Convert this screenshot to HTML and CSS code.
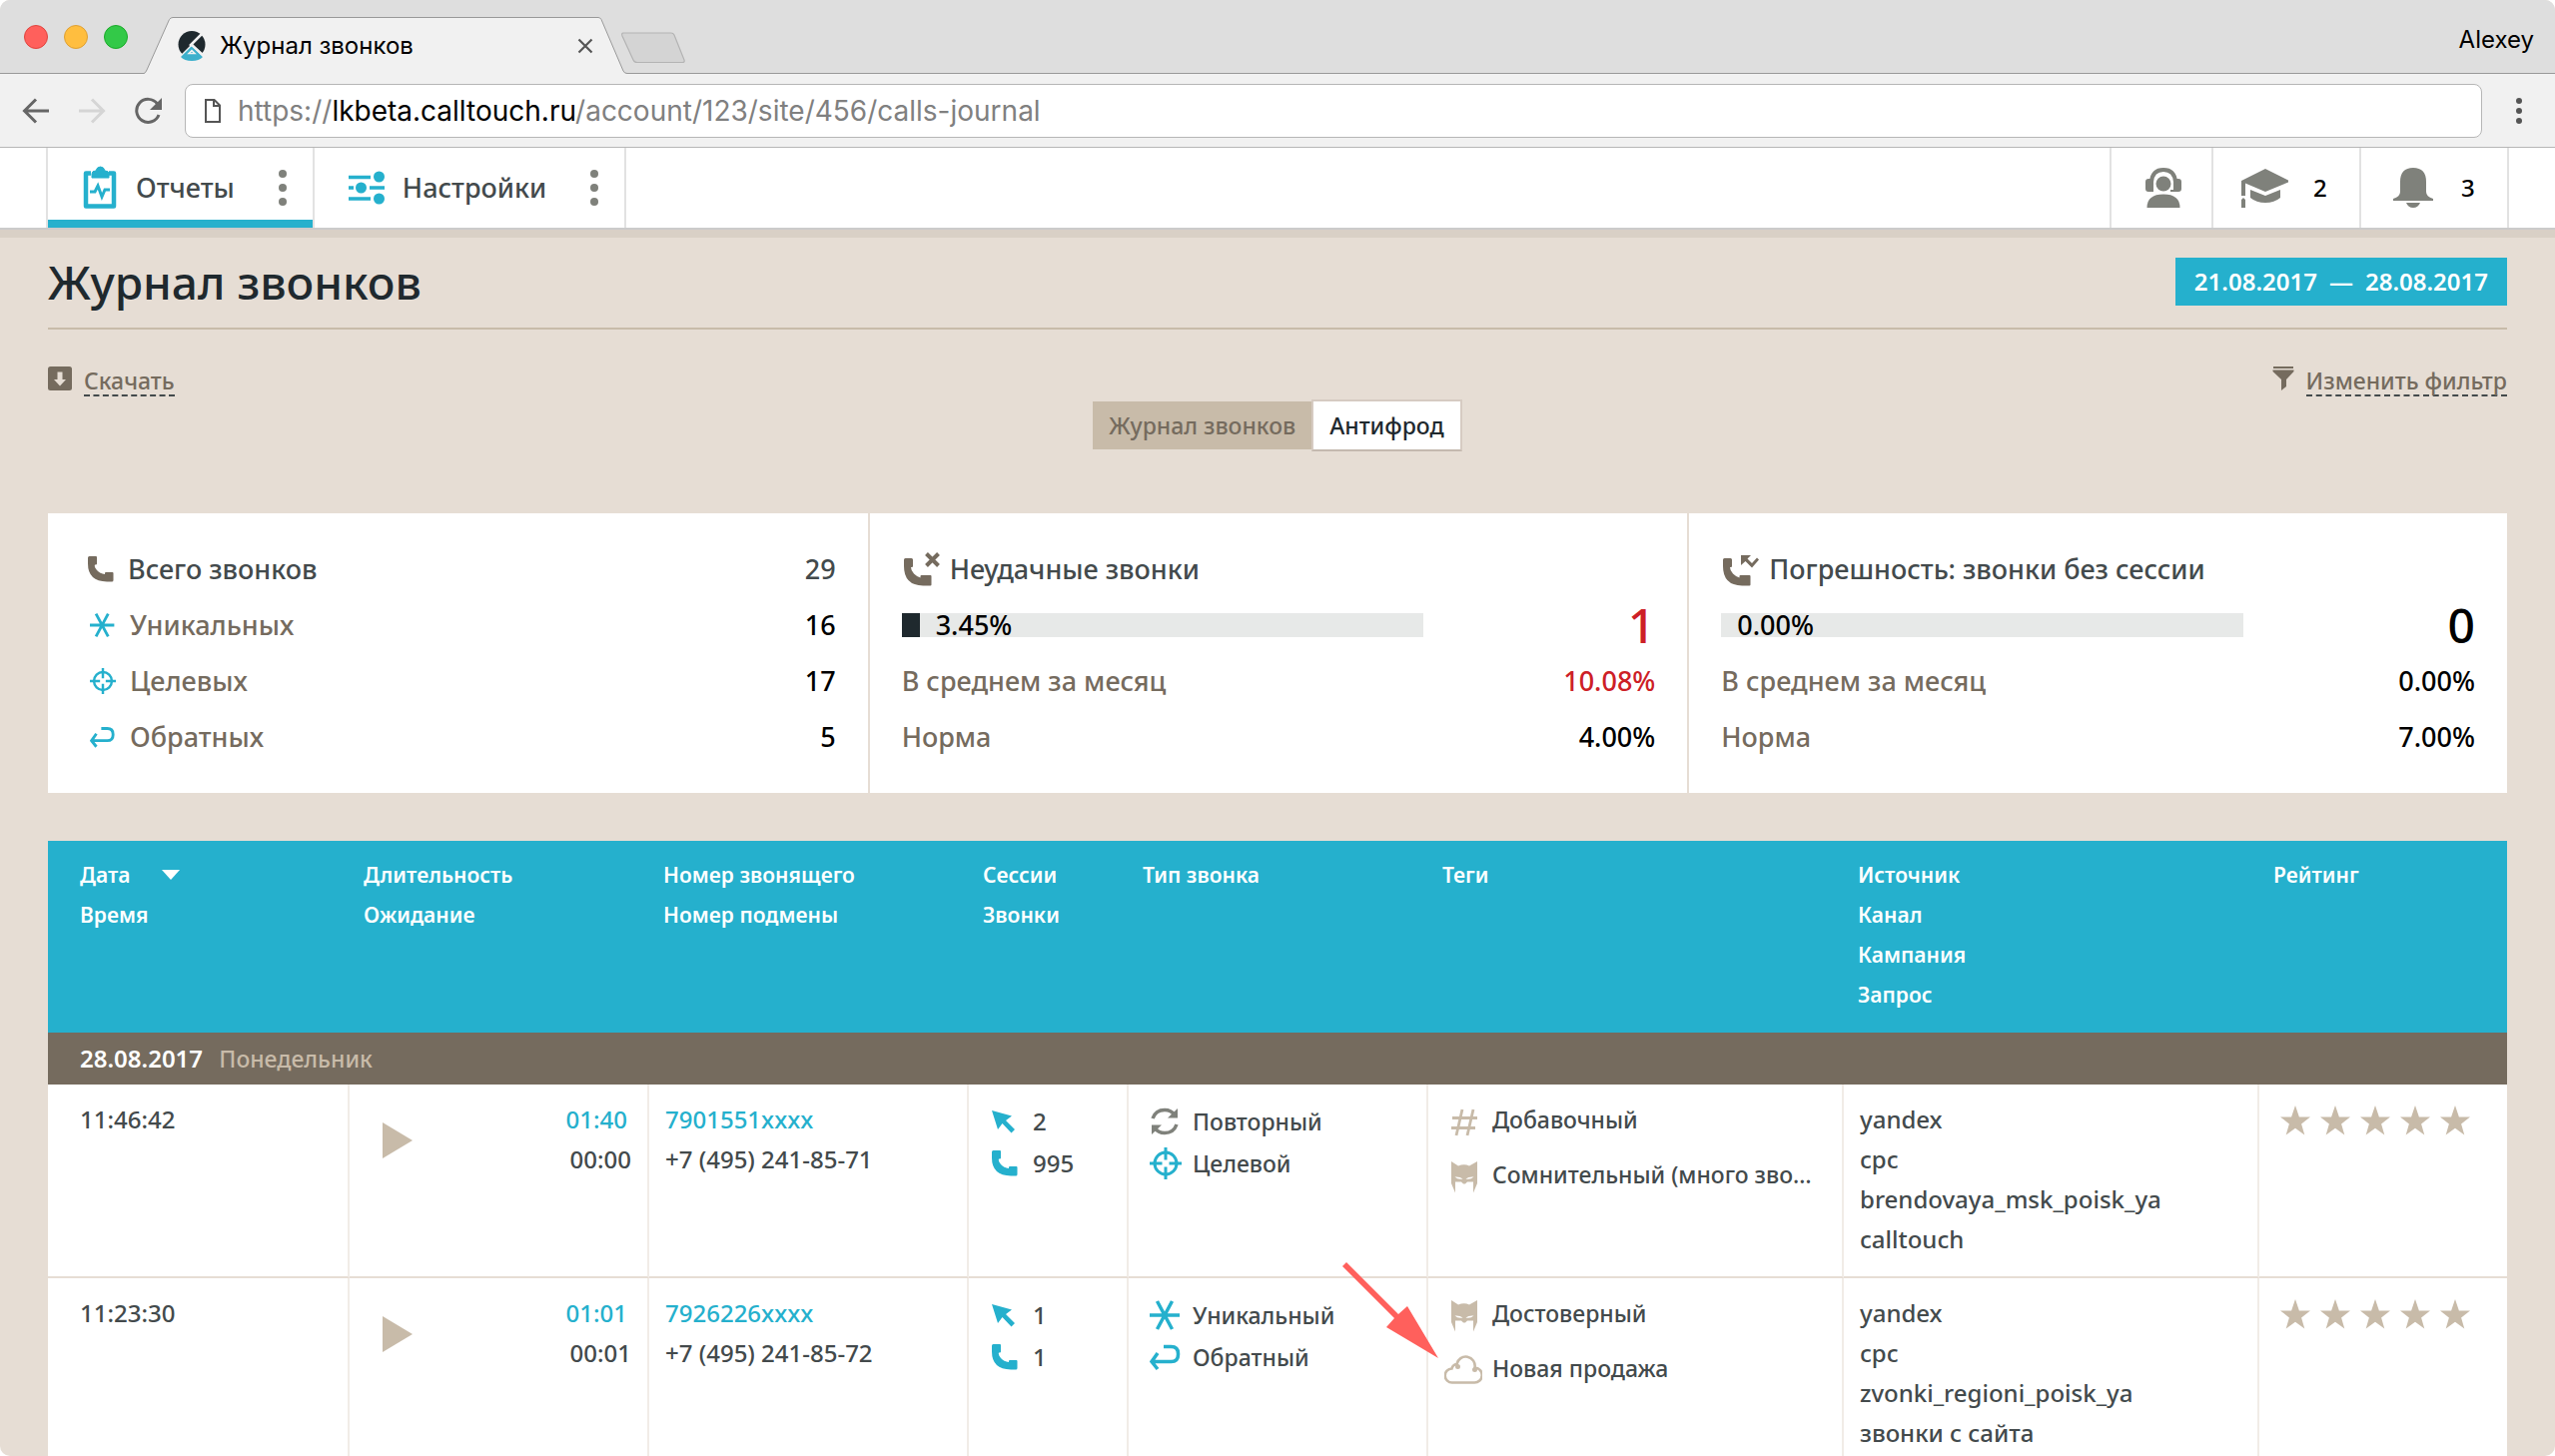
FILE: index.html
```html
<!DOCTYPE html>
<html lang="ru">
<head>
<meta charset="utf-8">
<meta name="viewport" content="width=device-width, initial-scale=1">
<title>Журнал звонков</title>
<link rel="stylesheet" href="styles.css">
</head>
<body>
<svg class="sprite" aria-hidden="true">
  <symbol id="phone" viewBox="0 0 26 26"><path d="M0 1.500Q0 0 1.500 0H8q1 0 1 1v6.500q0 1-1 1H7q-1 2 2 5.500t8 4v-1q0-1 1-1h6.500q1 0 1 1V24q0 1.500-1.500 1.500h-5Q0 25 0 7.500z" fill="currentColor"/></symbol>
  <symbol id="phone-cross" viewBox="0 0 38 34"><path d="M2 7.500Q2 6 3.500 6h6q1.500 0 1.500 1.500V14q0 1-1 1H9q0 3.500 3 6.500t6.500 4V24q0-1 1-1h9q1 0 1 1v8.500q0 1-1 1H21Q2 33 2 14z" fill="currentColor"/><path d="M24.500 1.500l12 12m0-12l-12 12" stroke="currentColor" stroke-width="4" fill="none"/></symbol>
  <symbol id="phone-missed" viewBox="0 0 38 34"><path d="M2 7.500Q2 6 3.500 6h6q1.500 0 1.500 1.500V14q0 1-1 1H9q0 3.500 3 6.500t6.500 4V24q0-1 1-1h9q1 0 1 1v8.500q0 1-1 1H21Q2 33 2 14z" fill="currentColor"/><path d="M20 3h10l-3.500 3.500 4.500 4.500 5-5.500 2 2-7 8-6.500-6.500L20 13z" fill="currentColor"/></symbol>
  <symbol id="star6" viewBox="0 0 32 32"><path d="M0 16h30M7.500 2l15 28M22.500 2l-15 28" stroke="currentColor" stroke-width="3.500" fill="none"/></symbol>
  <symbol id="target" viewBox="0 0 32 32"><circle cx="16" cy="16" r="11" fill="none" stroke="currentColor" stroke-width="3"/><path d="M16 0v12.500M16 19.500V32M0 16h12.500M19.500 16H32" stroke="currentColor" stroke-width="3" fill="none"/></symbol>
  <symbol id="return" viewBox="0 0 32 32"><path d="M14 5.500h7.500q7 0 7 7v1q0 7-7 7H3M8 12l-6 8.500L8 28" stroke="currentColor" stroke-width="3.500" fill="none"/></symbol>
  <symbol id="refresh" viewBox="0 0 32 32"><path d="M3 13Q6 4.500 15 4.500q6.500 0 10 5M27 19q-3 8.500-12 8.500-6.500 0-10-5" stroke="currentColor" stroke-width="3.500" fill="none"/><path d="M28 3v9.500H18zM2 29v-9.500h10z" fill="currentColor"/></symbol>
  <symbol id="cursor" viewBox="0 0 26 26"><path d="M0 2l20 5.500-6 4.500 9 9-3.500 3.500-9-9.500L6 21z" fill="currentColor"/></symbol>
  <symbol id="hash" viewBox="0 0 38 40"><path d="M8 18.500h25M7 28.500h24M18 10l-6 26M29 10l-6 26" stroke="currentColor" stroke-width="2.800" fill="none"/></symbol>
  <symbol id="mask" viewBox="0 0 38 40"><path fill-rule="evenodd" d="M7 7l7 4.500q6-2.500 11 0L33 7v22l-4 9.500V27.500h-6l-2 2h-2l-2-2h-6v11L7 29zM10.500 22.500q3 3 8 2-3-2.500-8-2zM29.500 22.500q-3 3-8 2 3-2.500 8-2z" fill="currentColor"/></symbol>
  <symbol id="cloud" viewBox="0 0 38 40"><path d="M8 34.500a7 7 0 0 1-.5-14 6 6 0 0 1 5-4.500 9 9 0 0 1 18 3.500 7.500 7.500 0 0 1-.5 15z" fill="none" stroke="currentColor" stroke-width="2.600"/><circle cx="13.500" cy="18.500" r="2.500" fill="currentColor"/><circle cx="30.500" cy="21.500" r="2.500" fill="currentColor"/></symbol>
  <symbol id="star" viewBox="0 0 30 30"><path d="M15 0l3.900 11.400H30l-8.900 7L24.300 29.500 15 22.800 5.700 29.500l3.200-11.100L0 11.400h11.100z" fill="currentColor"/></symbol>
  <symbol id="dots" viewBox="0 0 8 36"><circle cx="4" cy="4" r="4" fill="currentColor"/><circle cx="4" cy="18" r="4" fill="currentColor"/><circle cx="4" cy="32" r="4" fill="currentColor"/></symbol>
</svg>

<div class="window">
  <div class="tabstrip">
    <div class="lights"><span class="light light-close"></span><span class="light light-min"></span><span class="light light-max"></span></div>
    <div class="tab">
      <svg class="tab-shape" viewBox="0 0 484 57" preserveAspectRatio="none"><path d="M0 56.500Q1.500 56.500 3 53L25.500 2.500Q27 .500 29 .500H455q2 0 3 2L480 54q1 2.500 4 2.500V57H0z" fill="#f1f1f1"/><path d="M0 56.500Q1.500 56.500 3 53L25.500 2.500Q27 .500 29 .500H455q2 0 3 2L480 54q1 2.500 4 2.500" fill="none" stroke="#999"/></svg>
      <svg class="favicon" width="28" height="32" viewBox="0 0 28 32"><circle cx="14" cy="14.500" r="13.500" fill="#1f292e"/><path d="M14 14L1 27v5h26v-5z" fill="#f1f1f1"/><path d="M14 16L3 27q3.500 4 11 4t11-4z" fill="#3db0cc"/><path d="M12 16L25 3M13 14l13 12" stroke="#f1f1f1" stroke-width="2.500"/><path d="M14 20.500l3 3h-6z" fill="none" stroke="#f1f1f1" stroke-width="1.500"/></svg>
      <span class="tab-title">Журнал звонков</span>
      <button class="bare" aria-label="Закрыть вкладку"><svg width="16" height="16" viewBox="0 0 16 16"><path d="M1.500 1.500l13 13m0-13l-13 13" stroke="#555" stroke-width="2.200"/></svg></button>
    </div>
    <button class="bare new-tab" aria-label="Новая вкладка"><svg width="68" height="32" viewBox="0 0 68 32"><path d="M4 1h48q2 0 3 2l10 25q1 2.500-2 2.500H18q-3 0-4-2.500L3 4Q2 1 4 1z" fill="#d4d4d4" stroke="#b4b4b4" stroke-width="1.200"/></svg></button>
    <span class="profile">Alexey</span>
  </div>

  <div class="toolbar">
    <button class="bare" aria-label="Назад"><svg width="28" height="28" viewBox="0 0 28 28"><path d="M27 14H2M14 2.500L2.500 14 14 25.500" fill="none" stroke="#666" stroke-width="3"/></svg></button>
    <button class="bare" aria-label="Вперёд" disabled><svg width="28" height="28" viewBox="0 0 28 28"><path d="M1 14h25M14 2.500L25.500 14 14 25.500" fill="none" stroke="#d5d5d5" stroke-width="3"/></svg></button>
    <button class="bare" aria-label="Обновить"><svg width="28" height="28" viewBox="0 0 28 28"><path d="M23.500 7A11.500 11.500 0 1 0 25 18" fill="none" stroke="#666" stroke-width="3"/><path d="M28 1v12H16z" fill="#666"/></svg></button>
    <div class="omnibox">
      <svg width="18" height="26" viewBox="0 0 18 26"><path d="M2 2h8.500L16 7.500V24H2zM10 2v6h6" fill="none" stroke="#555" stroke-width="2"/></svg>
      <div class="url" role="textbox" tabindex="0" aria-label="Адрес">https://<b>lkbeta.calltouch.ru</b>/account/123/site/456/calls-journal</div>
    </div>
    <button class="bare" aria-label="Меню"><svg width="6" height="26" viewBox="0 0 6 26"><g fill="#555"><circle cx="3" cy="3" r="3"/><circle cx="3" cy="13" r="3"/><circle cx="3" cy="23" r="3"/></g></svg></button>
  </div>

  <header class="nav">
    <nav class="nav-main">
      <div class="nav-item nav-item-active">
        <a href="#reports"><svg width="36" height="44" viewBox="0 0 36 44"><path d="M9 7.500H4v33h28v-33h-5" fill="none" stroke="#25b0cd" stroke-width="4.500" stroke-linejoin="round"/><path d="M10 12V8q0-3 4-3 1-4 4.500-4T23 5q4 0 4 3v4z" fill="#25b0cd" stroke="#25b0cd" stroke-width="1"/><path d="M8 26h5l3-6 4 11 3-7h5" fill="none" stroke="#25b0cd" stroke-width="3"/></svg>Отчеты</a>
        <button class="bare nav-dots" aria-label="Меню отчетов"><svg width="8" height="36"><use href="#dots"/></svg></button>
      </div>
      <div class="nav-item">
        <a href="#settings"><svg width="36" height="34" viewBox="0 0 36 34"><path d="M0 6.500h22M0 17h5M21 17h15M0 28h22" stroke="#25b0cd" stroke-width="3.500"/><g fill="#25b0cd"><circle cx="30.500" cy="6" r="5.500"/><circle cx="12.500" cy="17" r="5.500"/><circle cx="30.500" cy="28" r="5.500"/></g></svg>Настройки</a>
        <button class="bare nav-dots" aria-label="Меню настроек"><svg width="8" height="36"><use href="#dots"/></svg></button>
      </div>
    </nav>
    <div class="nav-side">
      <button class="side-item side-support" aria-label="Поддержка"><svg width="36" height="40" viewBox="0 0 36 40"><circle cx="18" cy="16" r="7.500" fill="#7f817b"/><path d="M1.500 40q0-13.500 16.500-13.500T34.500 40z" fill="#7f817b"/><path d="M6 14Q7 2 18 2t12 12v8" fill="none" stroke="#7f817b" stroke-width="4"/><path d="M8 11v13H3q-3 0-3-3v-7q0-3 3-3zM28 11v11h-3v2h8q3 0 3-3v-7q0-3-3-3z" fill="#7f817b"/></svg></button>
      <button class="side-item" aria-label="Обучение: 2"><svg width="48" height="40" viewBox="0 0 48 40"><path d="M24 1l23 11.500v2L24 24 4 15.500V28H0V13zM9 22l15 6 15-6v8q-6 5-15 5t-15-5zM0 32l2-2 2 2v8H0z" fill="#7f817b"/></svg><span>2</span></button>
      <button class="side-item" aria-label="Уведомления: 3"><svg width="48" height="40" viewBox="0 0 48 40"><path d="M4 33v-2q7-2 7-7V14Q11 0 24 0t13 14v10q0 5 7 7v2zM17 35h14q-2 5-7 5t-7-5z" fill="#7f817b"/></svg><span>3</span></button>
    </div>
  </header>

  <main class="page">
    <div class="page-head">
      <h1>Журнал звонков</h1>
      <button class="date-range"><span>21.08.2017</span><span>—</span><span>28.08.2017</span></button>
    </div>

    <div class="actions">
      <a class="action" href="#download"><svg width="24" height="24" viewBox="0 0 24 24"><rect width="24" height="24" rx="2.500" fill="#756b5e"/><path d="M9.500 5.500h5v7.500h3.500L12 19.500 6 13h3.500z" fill="#e6ddd4"/></svg><span>Скачать</span></a>
      <a class="action" href="#filter"><svg width="22" height="24" viewBox="0 0 22 24"><path d="M1 0h20v2H1zM.500 3.500h21V5L14 13v7l-5 4V13L.500 5z" fill="#756b5e"/></svg><span>Изменить фильтр</span></a>
    </div>

    <div class="switch">
      <button class="switch-item switch-item-current">Журнал звонков</button>
      <button class="switch-item">Антифрод</button>
    </div>

    <section class="cards">
      <div class="card card-totals">
        <div class="stat stat-head"><svg width="26" height="26"><use href="#phone"/></svg><span class="stat-name">Всего звонков</span><span>29</span></div>
        <div class="stat"><svg width="26" height="26"><use href="#star6"/></svg><span class="stat-name">Уникальных</span><span>16</span></div>
        <div class="stat"><svg width="26" height="26"><use href="#target"/></svg><span class="stat-name">Целевых</span><span>17</span></div>
        <div class="stat"><svg width="26" height="26"><use href="#return"/></svg><span class="stat-name">Обратных</span><span>5</span></div>
      </div>
      <div class="card">
        <div class="stat stat-head"><svg width="38" height="34"><use href="#phone-cross"/></svg><span class="stat-name">Неудачные звонки</span></div>
        <div class="gauge"><div class="bar"><span class="bar-fill" style="width:3.45%"></span><span>3.45%</span></div><strong class="alert">1</strong></div>
        <div class="stat"><span class="stat-name">В среднем за месяц</span><span class="alert">10.08%</span></div>
        <div class="stat"><span class="stat-name">Норма</span><span>4.00%</span></div>
      </div>
      <div class="card">
        <div class="stat stat-head"><svg width="38" height="34"><use href="#phone-missed"/></svg><span class="stat-name">Погрешность: звонки без сессии</span></div>
        <div class="gauge"><div class="bar"><span class="bar-fill" style="width:0%"></span><span>0.00%</span></div><strong>0</strong></div>
        <div class="stat"><span class="stat-name">В среднем за месяц</span><span>0.00%</span></div>
        <div class="stat"><span class="stat-name">Норма</span><span>7.00%</span></div>
      </div>
    </section>

    <table class="calls">
      <colgroup><col class="c-date"><col class="c-length"><col class="c-number"><col class="c-sessions"><col class="c-type"><col><col><col class="c-rating"></colgroup>
      <thead>
        <tr>
          <th><button class="sort">Дата<svg width="18" height="10" viewBox="0 0 18 10"><path d="M0 0h18L9 10z" fill="#fff"/></svg></button><br>Время</th>
          <th>Длительность<br>Ожидание</th>
          <th>Номер звонящего<br>Номер подмены</th>
          <th>Сессии<br>Звонки</th>
          <th>Тип звонка</th>
          <th>Теги</th>
          <th>Источник<br>Канал<br>Кампания<br>Запрос</th>
          <th>Рейтинг</th>
        </tr>
      </thead>
      <tbody>
        <tr class="day"><th colspan="8" scope="rowgroup">28.08.2017 <span>Понедельник</span></th></tr>
        <tr>
          <td>11:46:42</td>
          <td><div class="length"><button class="bare play" aria-label="Прослушать"><svg width="30" height="36" viewBox="0 0 30 36"><path d="M0 0l30 18L0 36z" fill="#c8bba9"/></svg></button><div><a href="#call-1">01:40</a><br>00:00</div></div></td>
          <td><a href="#caller-1">7901551xxxx</a><br>+7 (495) 241-85-71</td>
          <td><ul class="marks marks-small"><li><svg width="26" height="26"><use href="#cursor"/></svg>2</li><li><svg width="26" height="26"><use href="#phone"/></svg>995</li></ul></td>
          <td><ul class="marks"><li class="grey"><svg width="32" height="32"><use href="#refresh"/></svg>Повторный</li><li><svg width="32" height="32"><use href="#target"/></svg>Целевой</li></ul></td>
          <td class="tags-cell"><ul class="tags"><li><svg width="38" height="40"><use href="#hash"/></svg>Добавочный</li><li><svg width="38" height="40"><use href="#mask"/></svg>Сомнительный (много зво…</li></ul></td>
          <td>yandex<br>cpc<br>brendovaya_msk_poisk_ya<br>calltouch</td>
          <td><div class="rating"><button class="bare" aria-label="Оценка 1"><svg width="30" height="30"><use href="#star"/></svg></button><button class="bare" aria-label="Оценка 2"><svg width="30" height="30"><use href="#star"/></svg></button><button class="bare" aria-label="Оценка 3"><svg width="30" height="30"><use href="#star"/></svg></button><button class="bare" aria-label="Оценка 4"><svg width="30" height="30"><use href="#star"/></svg></button><button class="bare" aria-label="Оценка 5"><svg width="30" height="30"><use href="#star"/></svg></button></div></td>
        </tr>
        <tr>
          <td>11:23:30</td>
          <td><div class="length"><button class="bare play" aria-label="Прослушать"><svg width="30" height="36" viewBox="0 0 30 36"><path d="M0 0l30 18L0 36z" fill="#c8bba9"/></svg></button><div><a href="#call-2">01:01</a><br>00:01</div></div></td>
          <td><a href="#caller-2">7926226xxxx</a><br>+7 (495) 241-85-72</td>
          <td><ul class="marks marks-small"><li><svg width="26" height="26"><use href="#cursor"/></svg>1</li><li><svg width="26" height="26"><use href="#phone"/></svg>1</li></ul></td>
          <td><ul class="marks"><li><svg width="32" height="32"><use href="#star6"/></svg>Уникальный</li><li><svg width="32" height="32"><use href="#return"/></svg>Обратный</li></ul></td>
          <td class="tags-cell"><ul class="tags"><li><svg width="38" height="40"><use href="#mask"/></svg>Достоверный</li><li><svg width="38" height="40"><use href="#cloud"/></svg>Новая продажа</li></ul><svg class="pointer" width="97" height="97" viewBox="0 0 97 97"><path d="M4 0l52 52 9-8 31 52-52-31 8-9L0 4z" fill="#ff605c"/></svg></td>
          <td>yandex<br>cpc<br>zvonki_regioni_poisk_ya<br>звонки с сайта</td>
          <td><div class="rating"><button class="bare" aria-label="Оценка 1"><svg width="30" height="30"><use href="#star"/></svg></button><button class="bare" aria-label="Оценка 2"><svg width="30" height="30"><use href="#star"/></svg></button><button class="bare" aria-label="Оценка 3"><svg width="30" height="30"><use href="#star"/></svg></button><button class="bare" aria-label="Оценка 4"><svg width="30" height="30"><use href="#star"/></svg></button><button class="bare" aria-label="Оценка 5"><svg width="30" height="30"><use href="#star"/></svg></button></div></td>
        </tr>
      </tbody>
    </table>
  </main>
</div>
</body>
</html>
```
FILE: styles.css
```css
* { box-sizing: border-box; }

body {
  margin: 0;
  background: #fff;
  color: #434a4c;
  font: 500 24px/40px "Noto Sans", sans-serif;
}

svg { display: block; flex: none; }
a { color: inherit; text-decoration: none; }
button { margin: 0; font: inherit; color: inherit; cursor: pointer; }

ul { margin: 0; padding: 0; list-style: none; }

.sprite { position: absolute; width: 0; height: 0; }

.bare {
  display: block;
  padding: 0;
  border: 0;
  background: none;
}

.window {
  height: 100vh;
  overflow: hidden;
  border-radius: 10px;
  background: #e6ddd4;
}

/* Browser frame */
.tabstrip {
  display: flex;
  align-items: flex-end;
  height: 74px;
  padding-right: 21px;
  border-bottom: 1px solid #999;
  background: #dedede;
  color: #000;
  font: 400 24px/32px Inter, sans-serif;
}

.lights {
  display: flex;
  align-self: center;
  gap: 16px;
  width: 144px;
  padding-left: 24px;
}

.light {
  width: 24px;
  height: 24px;
  border: 1px solid #e0443e;
  border-radius: 50%;
  background: #ff605c;
}

.light-min { border-color: #dea034; background: #ffbe3f; }
.light-max { border-color: #1aab29; background: #33c948; }

.tab {
  position: relative;
  display: flex;
  align-items: center;
  width: 484px;
  height: 57px;
  margin-bottom: -1px;
  padding: 0 34px;
}

.tab-shape { position: absolute; inset: 0; width: 100%; height: 100%; }
.favicon, .tab-title, .tab .bare { position: relative; }
.tab-title { flex: 1; padding-left: 14px; }

.new-tab { margin: 0 auto 9px -8px; }
.profile { padding-bottom: 17px; }

.toolbar {
  display: flex;
  align-items: center;
  gap: 28px;
  height: 74px;
  padding: 0 33px 0 22px;
  border-bottom: 1px solid #b6b6b6;
  background: #f1f1f1;
}

.omnibox {
  flex: 1;
  display: flex;
  align-items: center;
  gap: 16px;
  height: 54px;
  margin-right: 6px;
  margin-left: -5px;
  padding: 0 18px;
  border: 1px solid #b6b6b6;
  border-radius: 8px;
  background: #fff;
}

.url {
  color: #808080;
  font: 400 28px/36px Inter, sans-serif;
  white-space: nowrap;
}

.url b { color: #000; font-weight: 400; }

/* Product navigation */
.nav {
  display: flex;
  justify-content: space-between;
  height: 82px;
  padding: 0 46px;
  border-bottom: 2px solid #cbcbcb;
  background: #fff;
  box-shadow: 0 8px #d9d0c6;
}

.nav-main, .nav-side { display: flex; }

.nav-item {
  display: flex;
  border-right: 2px solid #e2e2e2;
  font-size: 27px;
}

.nav-item:first-child { border-left: 2px solid #e2e2e2; }
.nav-item-active { box-shadow: inset 0 -8px #25b0cd; }

.nav-item a {
  display: flex;
  align-items: center;
  gap: 18px;
  padding: 0 18px 0 34px;
}

.nav-dots {
  width: 60px;
  padding: 0 26px;
  color: #7f817b;
}

.side-item {
  display: flex;
  align-items: center;
  gap: 24px;
  width: 148px;
  padding: 0 0 0 28px;
  border: 0;
  border-left: 2px solid #e2e2e2;
  background: none;
  color: #000;
}

.side-item:last-child { width: 150px; border-right: 2px solid #e2e2e2; }
.side-support { width: 102px; padding-left: 34px; }

/* Page */
.page { padding: 0 48px; }

.page-head {
  display: flex;
  align-items: center;
  justify-content: space-between;
  height: 100px;
  padding-top: 6px;
  border-bottom: 2px solid #c8bba9;
}

h1 {
  margin: 0;
  color: #1f292e;
  font-size: 46px;
  font-weight: 500;
  line-height: 60px;
}

.date-range {
  display: flex;
  gap: 12px;
  padding: 4px 19px;
  border: 0;
  background: #25b0cd;
  color: #fff;
  font-weight: 600;
}

.actions {
  display: flex;
  justify-content: space-between;
  margin-top: 37px;
  color: #756b5e;
  font-size: 23px;
  line-height: 28px;
}

.action { display: flex; gap: 12px; }
.action span { border-bottom: 2px dashed #434a4c; }

.switch {
  display: flex;
  align-items: center;
  justify-content: center;
  margin: 3px 0 62px;
}

.switch-item {
  padding: 4px 16px;
  border: 2px solid #d6cbc2;
  border-bottom-color: #c4b9af;
  background: #fff;
  color: #1f292e;
  font-size: 23px;
}

.switch-item-current {
  border: 0;
  background: #c8bba9;
  color: #756b5e;
}

/* Summary */
.cards {
  display: grid;
  grid-template-columns: repeat(3, 1fr);
  margin-bottom: 48px;
  background: #fff;
  color: #000;
  font-size: 27px;
}

.card { padding: 28px 32px; }
.card + .card { border-left: 2px solid #e6ddd4; }
.card-totals { padding-left: 40px; }

.stat {
  display: flex;
  align-items: center;
  gap: 10px;
  height: 56px;
}

.stat-name { flex: 1; color: #756b5e; }
.stat svg { color: #25b0cd; }
.card-totals .stat { gap: 14px; }
.card-totals .stat + .stat { padding-left: 2px; }
.stat-head svg { color: #756b5e; }
.stat-head, .stat-head .stat-name { color: #434a4c; }

.gauge {
  display: grid;
  grid-template-columns: 9fr 4fr;
  align-items: center;
  height: 56px;
}

.gauge strong {
  font-size: 48px;
  font-weight: 500;
  text-align: right;
}

.bar {
  display: flex;
  gap: 16px;
  height: 24px;
  background: #e7e9e8;
  line-height: 24px;
}

.bar-fill { background: #1f292e; }
.alert { color: #cd2026; }

/* Calls */
.calls {
  width: 100%;
  border-spacing: 0;
  table-layout: fixed;
  background: #fff;
}

.c-date { width: 302px; }
.c-length { width: 300px; }
.c-number { width: 320px; }
.c-sessions { width: 160px; }
.c-type { width: 300px; }
.c-rating { width: 248px; }

.calls thead th {
  height: 192px;
  padding: 14px 14px 18px;
  background: #25b0cd;
  color: #fff;
  font-size: 21px;
  font-weight: 600;
  text-align: left;
  vertical-align: top;
}

.calls thead th:first-child, .calls td:first-child { padding-left: 32px; }

.sort {
  display: inline-flex;
  align-items: center;
  gap: 32px;
  padding: 0;
  border: 0;
  background: none;
}

.calls .day th {
  padding: 6px 32px;
  background: #756b5e;
  color: #fff;
  font-weight: 600;
  text-align: left;
}

.day span {
  padding-left: 10px;
  color: #c8bba9;
  font-size: 23px;
  font-weight: 500;
}

.calls td {
  padding: 15px 16px 17px;
  border-right: 2px solid #f1ece7;
  border-bottom: 2px solid #e6ddd4;
  vertical-align: top;
  white-space: nowrap;
}

.calls td:last-child { border-right: 0; }
.calls td a { color: #25b0cd; }

.length {
  display: flex;
  align-items: flex-start;
  justify-content: space-between;
  text-align: right;
}

.length a { margin-right: 4px; }
.play { margin: 23px 0 0 17px; }

.marks { padding: 1px 0 0 5px; font-size: 23px; line-height: 42px; }
.marks li { display: flex; align-items: center; gap: 11px; }
.marks svg { color: #25b0cd; }
.marks .grey svg { color: #7f817b; }
.marks-small { padding-left: 7px; font-size: 24px; }
.marks-small li { gap: 15px; }

.tags-cell { position: relative; }
.tags { display: flex; flex-direction: column; gap: 15px; font-size: 23px; }
.tags li { display: flex; gap: 10px; }
.tags svg { color: #c8bba9; }

.pointer { position: absolute; top: -16px; left: -86px; }

.rating { display: flex; gap: 10px; padding: 6px 0 0 5px; color: #c8bba9; }
.rating .bare { color: inherit; }
```
